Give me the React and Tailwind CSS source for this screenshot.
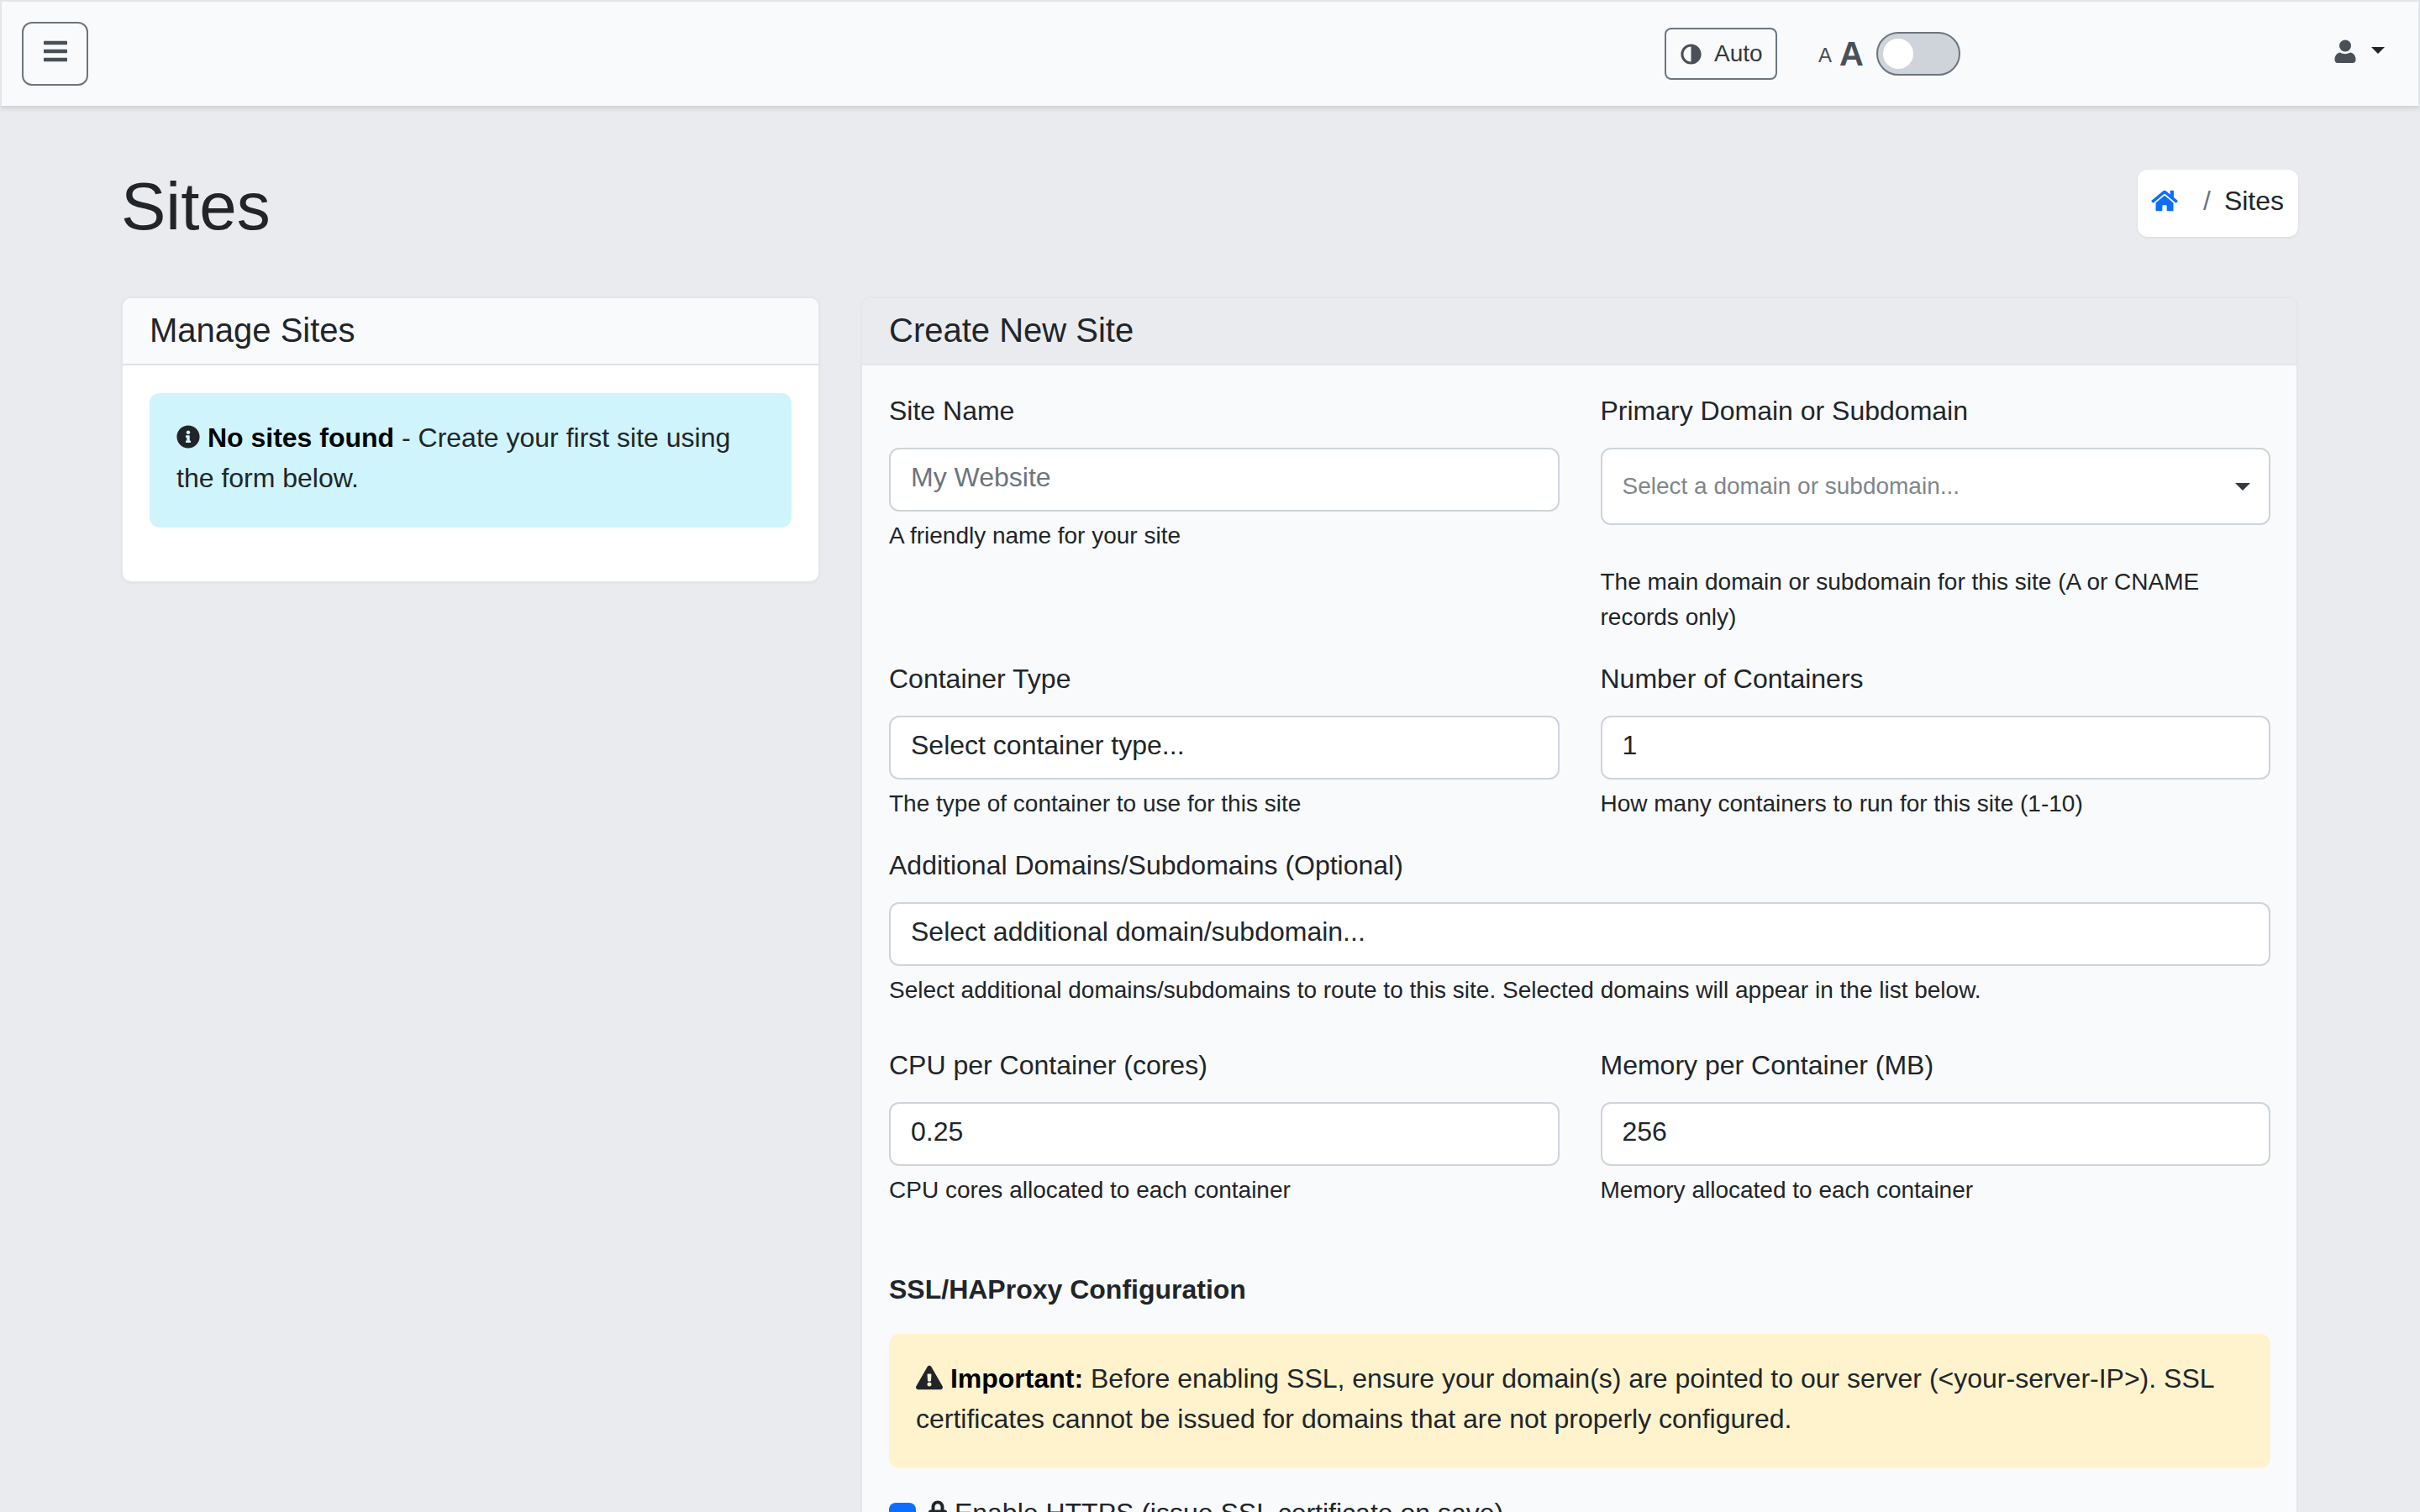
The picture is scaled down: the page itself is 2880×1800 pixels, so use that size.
import { FaAdjust, FaBars, FaExclamationTriangle, FaHome, FaInfoCircle, FaLock } from 'react-icons/fa'

function Label({ children }) {
  return <label className="block h-[48px] text-[32px] leading-[41px] mb-4">{children}</label>
}

function Field({ label, value, help }) {
  return (
    <div>
      <Label>{label}</Label>
      <input
        readOnly
        value={value || ''}
        placeholder={value ? undefined : 'My Website'}
        className="block w-full h-[76px] px-6 pb-[6px] text-[32px] leading-[48px] text-[#212529] placeholder:text-[#6c757d] bg-white border-2 border-[#ced4da] rounded-xl outline-none"
      />
      <div className="mt-2 text-[28px] leading-[42px]">{help}</div>
    </div>
  )
}

function UserIcon() {
  return (
    <svg width="26" height="28" viewBox="0 0 26 28" fill="currentColor">
      <circle cx="13" cy="7.5" r="7" />
      <path d="M7 15.5c3 2.2 9 2.2 12 0 4 .6 6.500 4 6.500 8.500v.5c0 1.900-1.600 3.500-3.500 3.500H4c-1.900 0-3.500-1.600-3.500-3.500V24c0-4.500 2.500-7.900 6.500-8.500z" />
    </svg>
  )
}

export default function App() {
  return (
    <div className="h-[1800px] overflow-hidden bg-[#e9ebef] text-[#212529] font-['Liberation_Sans',Arial,sans-serif]">
      {/* Navbar */}
      <nav className="h-[126px] flex items-center pl-[24px] bg-[#f9fafc] border-2 border-b-0 border-[#e3e6ea] shadow-[0_3px_6px_rgba(0,0,0,0.12)]">
        <button className="w-[79px] h-[76px] flex items-center justify-center border-2 border-[#6c757d] rounded-xl text-[#495057]">
          <FaBars className="w-[28px] h-[32px] mb-[6px]" />
        </button>

        <button className="ml-auto w-[134px] h-[62px] flex items-center pl-[17px] border-2 border-[#6c757d] rounded-lg text-[#343a40] text-[28px] leading-none">
          <FaAdjust className="w-[25px] h-[25px] text-[#495057] -scale-x-100" />
          <span className="ml-[15px]">Auto</span>
        </button>

        <div className="ml-[49px] flex items-center text-[#495057]">
          <span className="text-[24px] leading-none mt-1">A</span>
          <span className="ml-[9px] text-[40px] leading-none font-bold">A</span>
          <div className="ml-[15px] w-[100px] h-[52px] p-[6px] rounded-full bg-[#ced4da] border-2 border-[#6c757d]">
            <div className="w-[36px] h-[36px] rounded-full bg-white" />
          </div>
        </div>

        <div className="ml-[445px] mr-[40px] mb-[6px] flex items-center text-[#495057]">
          <UserIcon />
          <span className="ml-[18px] mb-[2px] border-x-[8px] border-x-transparent border-t-[8px] border-t-[#212529]" />
        </div>
      </nav>

      {/* Page */}
      <main className="pl-[144px] pr-[145px] pt-[72px]">
        <div className="flex justify-between items-start">
          <h1 className="text-[80px] leading-[96px] font-light">Sites</h1>
          <div className="mt-[4px] h-[80px] w-[191px] flex items-center pl-[16px] pb-[6px] bg-white rounded-xl shadow-[0_1px_3px_rgba(0,0,0,0.08)] text-[32px]">
            <FaHome className="w-[32px] h-[28px] text-[#0d6efd]" />
            <span className="ml-[30px] text-[#6c757d]">/</span>
            <span className="ml-[16px]">Sites</span>
          </div>
        </div>

        <div className="mt-[59px] grid grid-cols-[832px_1fr] gap-x-[48px] items-start">
          {/* Manage Sites */}
          <section className="bg-white rounded-xl border-2 border-[#e3e6ea] overflow-hidden shadow-[0_1px_3px_rgba(0,0,0,0.04)]">
            <h5 className="pl-[32px] pt-[14px] pb-[16px] bg-[#f9fafc] border-b-2 border-[#dee2e6] text-[40px] leading-[48px]">Manage Sites</h5>
            <div className="px-[32px] pt-[33px] pb-[32px]">
              <div className="mb-[32px] px-[32px] pt-[29px] pb-[35px] bg-[#cff4fc] rounded-xl text-[32px] leading-[48px]">
                <FaInfoCircle className="inline w-[28px] h-[28px] align-[-2px]" />{' '}
                <strong className="text-black">No sites found</strong> - Create your first site using the form below.
              </div>
            </div>
          </section>

          {/* Create New Site */}
          <section className="h-[1500px] bg-[#f9fafc] rounded-xl border-2 border-[#e3e6ea] overflow-hidden">
            <h5 className="pl-[32px] pt-[14px] pb-[16px] bg-[#e9ebef] border-b-2 border-[#e3e6ea] text-[40px] leading-[48px]">Create New Site</h5>
            <div className="pl-[32px] pr-[31px] pt-[34px]">
              <div className="grid grid-cols-2 gap-x-[49px] gap-y-[32px]">
                <Field label="Site Name" help="A friendly name for your site" />
                <div>
                  <Label>Primary Domain or Subdomain</Label>
                  <div className="h-[92px] flex items-center justify-between pl-[24px] pr-[22px] bg-white border-2 border-[#ced4da] rounded-xl text-[28px] text-[#80868c]">
                    <span>Select a domain or subdomain...</span>
                    <span className="border-x-[9px] border-x-transparent border-t-[9px] border-t-[#343a40]" />
                  </div>
                  <div className="mt-[47px] text-[28px] leading-[42px]">The main domain or subdomain for this site (A or CNAME records only)</div>
                </div>
                <Field label="Container Type" value="Select container type..." help="The type of container to use for this site" />
                <Field label="Number of Containers" value="1" help="How many containers to run for this site (1-10)" />
                <div className="col-span-2 mb-[16px]">
                  <Field
                    label="Additional Domains/Subdomains (Optional)"
                    value="Select additional domain/subdomain..."
                    help="Select additional domains/subdomains to route to this site. Selected domains will appear in the list below."
                  />
                </div>
                <Field label="CPU per Container (cores)" value="0.25" help="CPU cores allocated to each container" />
                <Field label="Memory per Container (MB)" value="256" help="Memory allocated to each container" />
              </div>

              <h6 className="mt-[78px] mb-[34px] text-[32px] leading-[38px] font-bold">SSL/HAProxy Configuration</h6>
              <div className="px-[32px] pt-[29px] pb-[35px] bg-[#fff3cd] rounded-xl text-[32px] leading-[48px]">
                <FaExclamationTriangle className="inline w-[32px] h-[30px] align-[-3px]" />{' '}
                <strong className="text-black">Important:</strong> Before enabling SSL, ensure your domain(s) are pointed to our server (&lt;your-server-IP&gt;). SSL certificates cannot be issued for domains that are not properly configured.
              </div>
              <label className="mt-[32px] flex items-start text-[32px] leading-[42px]">
                <span className="mt-[9px] w-[32px] h-[32px] flex items-center justify-center rounded-lg bg-[#0d6efd]">
                  <svg width="22" height="22" viewBox="0 0 20 20" fill="none" stroke="#fff" strokeWidth="3" strokeLinecap="round" strokeLinejoin="round">
                    <path d="M6 10l3 3l6-6" />
                  </svg>
                </span>
                <span className="ml-[15px]">
                  <FaLock className="inline w-[22px] h-[30px] align-[-2px]" /> Enable HTTPS (issue SSL certificate on save)
                </span>
              </label>
            </div>
          </section>
        </div>
      </main>
    </div>
  )
}
